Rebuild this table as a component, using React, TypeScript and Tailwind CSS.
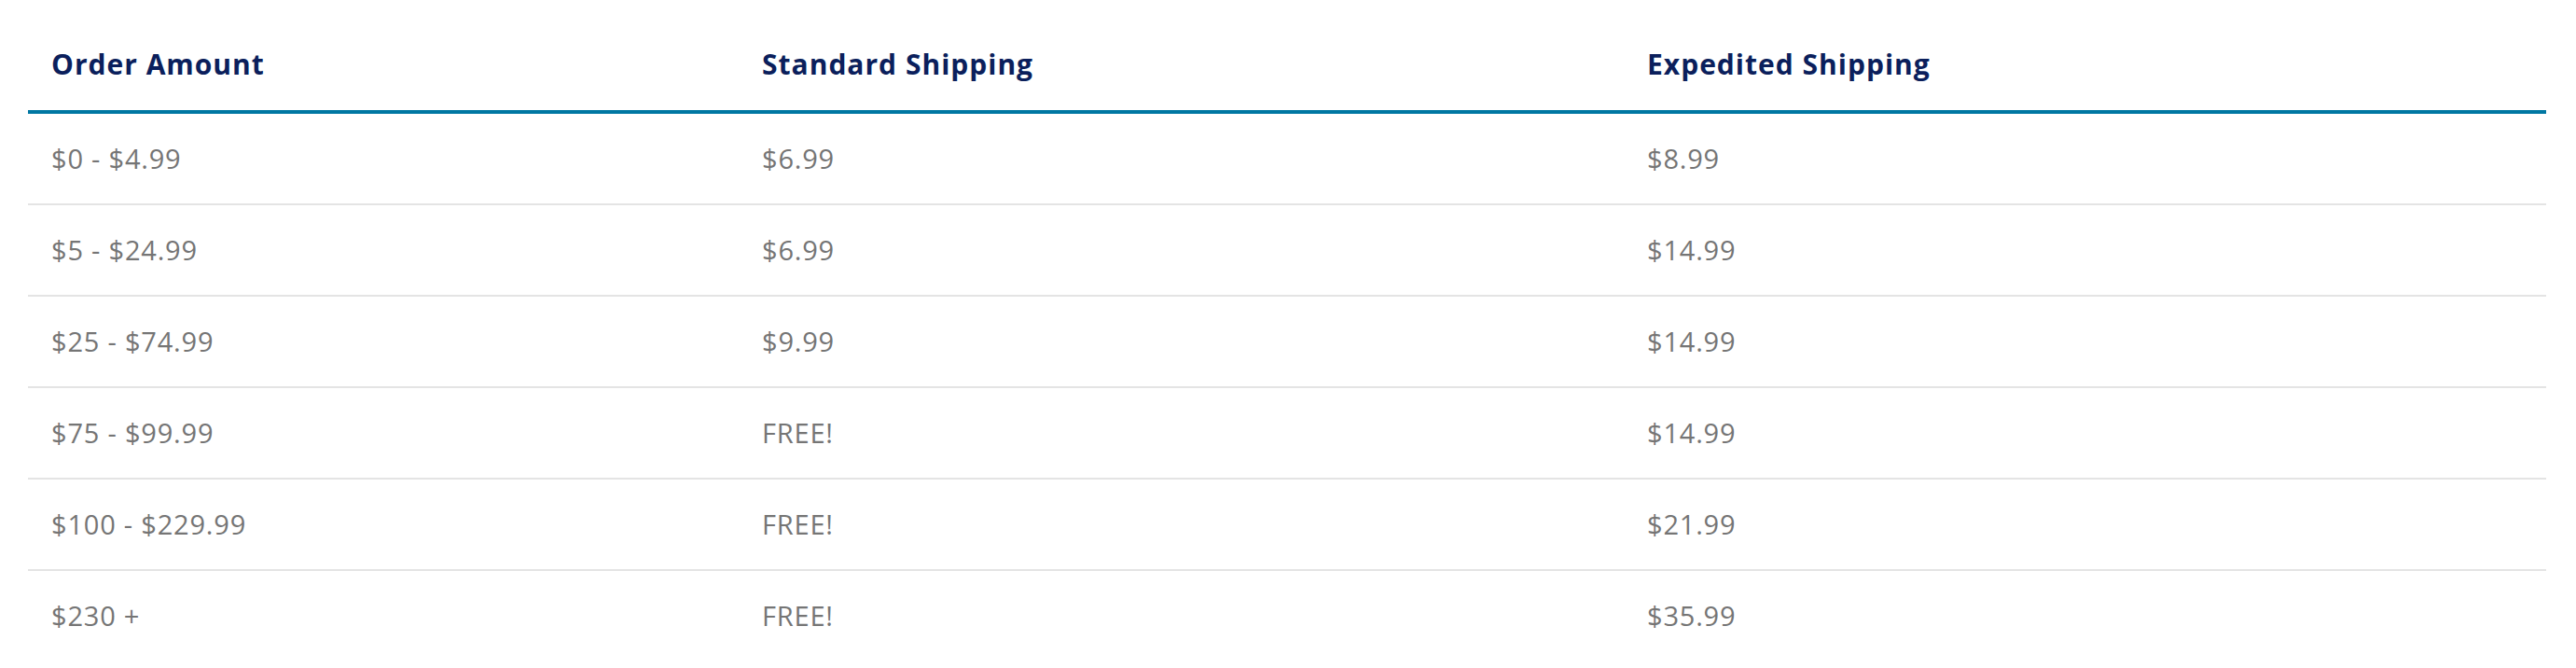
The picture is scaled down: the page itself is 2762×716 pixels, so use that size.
import React from "react";

const rows = [
  { amount: "$0 - $4.99", standard: "$6.99", expedited: "$8.99" },
  { amount: "$5 - $24.99", standard: "$6.99", expedited: "$14.99" },
  { amount: "$25 - $74.99", standard: "$9.99", expedited: "$14.99" },
  { amount: "$75 - $99.99", standard: "FREE!", expedited: "$14.99" },
  { amount: "$100 - $229.99", standard: "FREE!", expedited: "$21.99" },
  { amount: "$230 +", standard: "FREE!", expedited: "$35.99" },
];

const cols = "grid grid-cols-[762px_949px_1fr]";

const App = () => {
  return (
    <div className="bg-white pt-[19px] pl-[30px] pr-[32px] font-['Open_Sans',sans-serif]">
      {/* Header */}
      <div
        className={`${cols} border-b-4 border-[#0077a2] text-[30px] leading-[42px] font-bold tracking-[1px] text-[#0b1f5c]`}
      >
        <div className="pt-[29px] pb-[28px] pl-[25px]">Order Amount</div>
        <div className="pt-[29px] pb-[28px] pl-[25px]">Standard Shipping</div>
        <div className="pt-[29px] pb-[28px] pl-[25px]">Expedited Shipping</div>
      </div>

      {/* Body rows */}
      {rows.map((row, i) => (
        <div
          key={row.amount}
          className={`${cols} text-[29px] leading-[42px] tracking-[0.8px] text-[#757575] ${
            i < rows.length - 1 ? "border-b-2 border-[#e4e4e4]" : ""
          }`}
        >
          <div className="py-[27px] pl-[25px]">{row.amount}</div>
          <div className="py-[27px] pl-[25px]">{row.standard}</div>
          <div className="py-[27px] pl-[25px]">{row.expedited}</div>
        </div>
      ))}
    </div>
  );
};

export default App;
